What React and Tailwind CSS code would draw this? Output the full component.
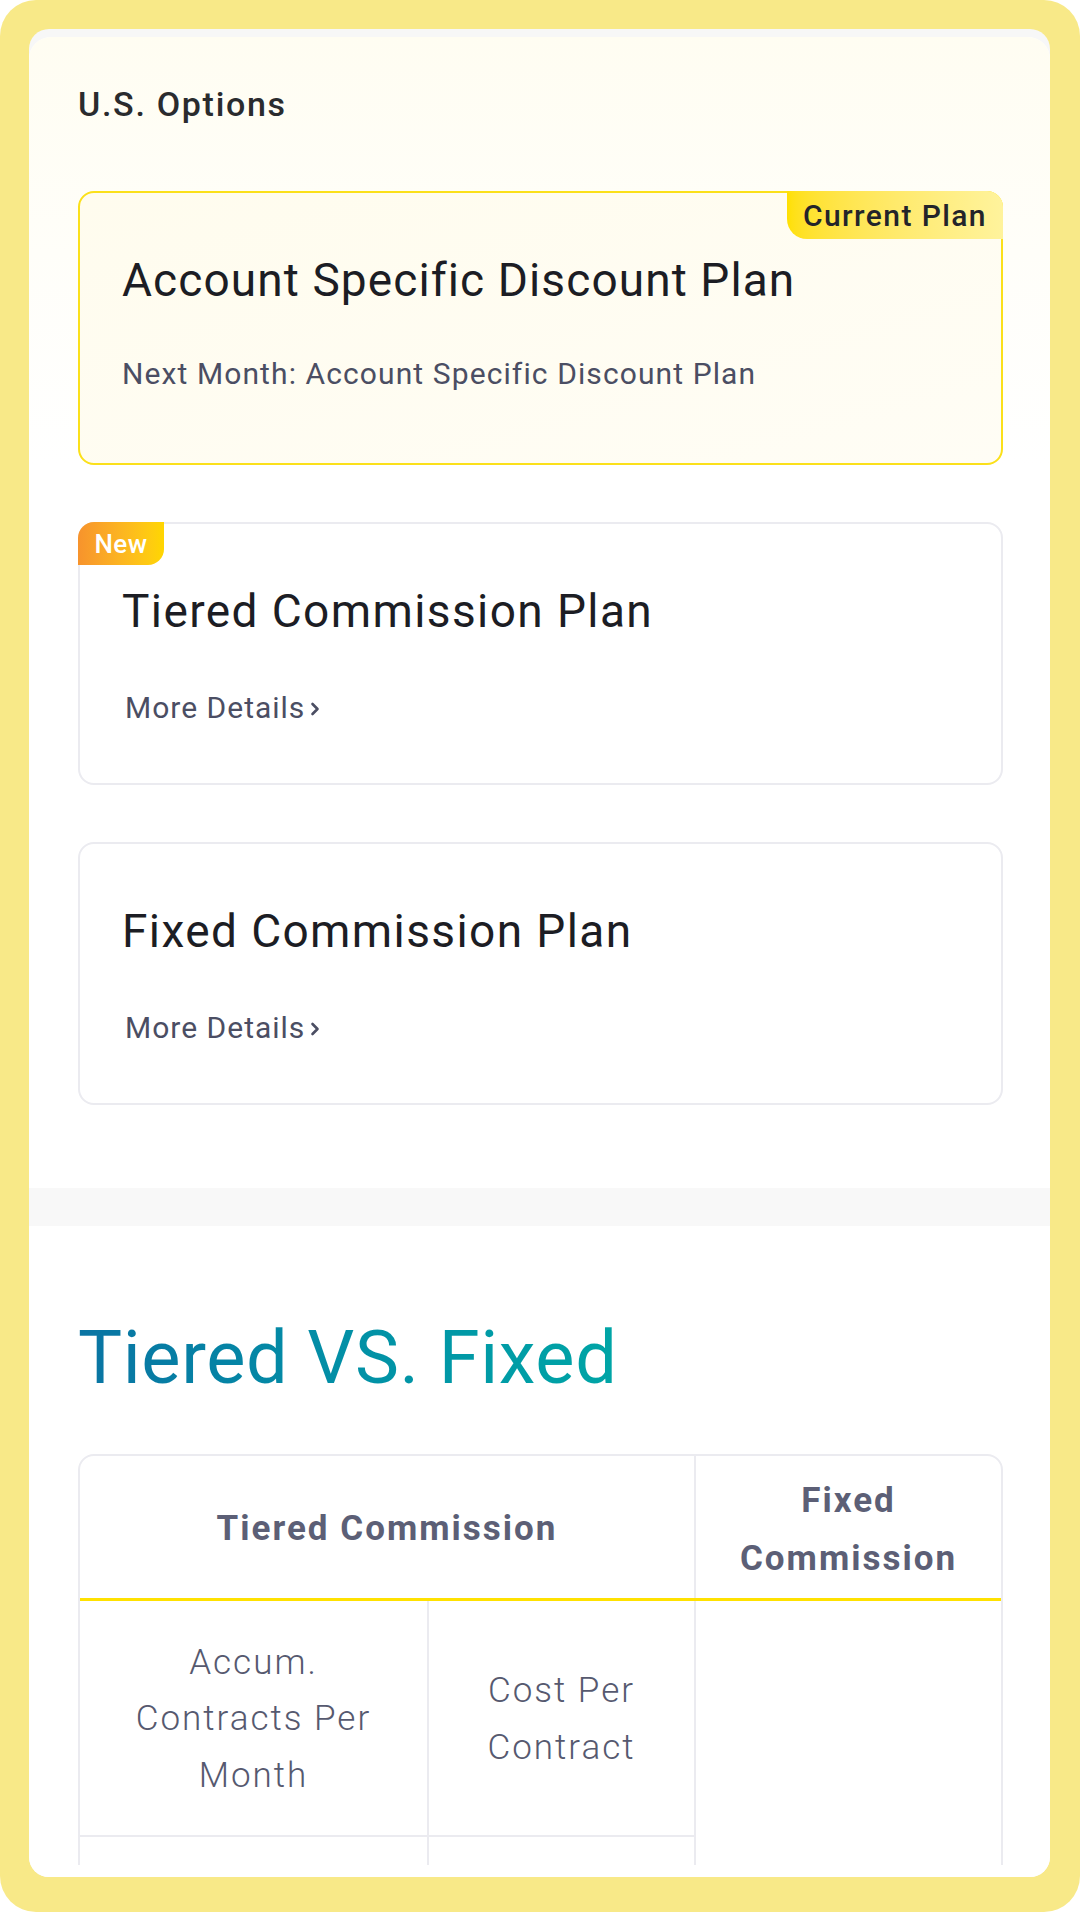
function Chevron() {
  return (
    <svg width="10" height="14" viewBox="0 0 10 14" className="ml-[5px] mt-[1px]">
      <polyline points="2.5,2 7.5,7 2.5,12" fill="none" stroke="#4b4e63" strokeWidth="2.6" strokeLinecap="round" strokeLinejoin="round" />
    </svg>
  );
}

function PlanCard({ title, badge }) {
  return (
    <div className="relative ml-[49px] mt-[57px] w-[925px] h-[263px] rounded-[16px] border-2 border-[#ebebf0] bg-white pl-[42px] pt-[59px]">
      {badge && (
        <div className="absolute -left-[2px] -top-[2px] w-[86px] h-[43px] rounded-tl-[16px] rounded-br-[16px] bg-linear-to-r from-[#f7932c] to-[#ffd600] flex items-center justify-center text-white text-[26px] font-medium tracking-[0.5px] pt-[2px]">
          New
        </div>
      )}
      <div className="h-[56px] leading-[56px] text-[46px] text-[#1c1d24] tracking-[1.4px]">{title}</div>
      <div className="mt-[49px] h-[40px] flex items-center text-[30px] text-[#4b4e63] tracking-[1px] pl-[3px]">
        <span className="leading-[40px]">More Details</span>
        <Chevron />
      </div>
    </div>
  );
}

export default function App() {
  return (
    <div className="w-[1080px] h-[1920px] bg-white font-['Roboto',_sans-serif]">
      <div className="w-[1080px] h-[1912px] rounded-[36px] bg-[#f8e988] pt-[29px] pl-[29px] pr-[30px] pb-[35px] flex">
        <div className="flex-1 rounded-[20px] bg-[#f7f7f7] overflow-hidden flex flex-col">
          <div className="mt-[8px] h-[1828px] shrink-0 rounded-t-[22px] bg-white overflow-hidden">
            <div className="bg-linear-to-b from-[#fffdf2] via-[#fffef9] to-white pt-[47px]">
              <div className="ml-[49px] h-[40px] leading-[40px] text-[34px] font-medium text-[#2a2b2e] tracking-[1.7px]">
                U.S. Options
              </div>
              <div className="relative ml-[49px] mt-[67px] w-[925px] h-[274px] rounded-[16px] border-2 border-[#fbe01a] bg-linear-to-br from-[#fffcee] to-[#fffdf5] pl-[42px] pt-[59px]">
                <div className="absolute -right-[2px] -top-[2px] w-[216px] h-[48px] rounded-tr-[16px] rounded-bl-[20px] bg-linear-to-r from-[#ffe000] to-[#fff39c] flex items-center justify-center text-[30px] font-medium text-[#23242a] tracking-[1.4px]">
                  Current Plan
                </div>
                <div className="h-[56px] leading-[56px] text-[46px] text-[#1c1d24] tracking-[1.1px]">
                  Account Specific Discount Plan
                </div>
                <div className="mt-[46px] h-[40px] leading-[40px] text-[30px] text-[#4b4e63] tracking-[1.1px]">
                  Next Month: Account Specific Discount Plan
                </div>
              </div>
            </div>

            <PlanCard title="Tiered Commission Plan" badge />
            <PlanCard title="Fixed Commission Plan" />

            <div className="mt-[83px] h-[38px] bg-[#f8f8f8]" />

            <div className="ml-[49px] mt-[95px] h-[74px] leading-[74px] text-[74px] tracking-[0.6px] bg-linear-to-r from-[#0a74a3] via-[#0290a6] to-[#00a5a6] bg-clip-text text-transparent w-fit">
              Tiered VS. Fixed
            </div>

            <div className="ml-[49px] mt-[59px] w-[925px] h-[600px] rounded-[16px] border-2 border-[#ebebf0] overflow-hidden">
              <div className="flex h-[145px] border-b-[3px] border-[#ffe100]">
                <div className="w-[616px] pt-[5px] border-r-2 border-[#ebebf0] flex items-center justify-center text-[35px] font-bold text-[#5c5f76] tracking-[2px]">
                  Tiered Commission
                </div>
                <div className="flex-1 pt-[5px] flex items-center justify-center text-center text-[35px] leading-[58px] font-bold text-[#5c5f76] tracking-[2px]">
                  <div>
                    Fixed
                    <br />
                    Commission
                  </div>
                </div>
              </div>
              <div className="flex h-full">
                <div className="w-[616px] border-r-2 border-[#ebebf0]">
                  <div className="flex h-[236px] border-b-2 border-[#ebebf0]">
                    <div className="w-[349px] pt-[3px] border-r-2 border-[#ebebf0] flex items-center justify-center text-center text-[35px] leading-[56.5px] font-light text-[#56596f] tracking-[2px]">
                      <div>
                        Accum.
                        <br />
                        Contracts Per
                        <br />
                        Month
                      </div>
                    </div>
                    <div className="flex-1 pt-[3px] flex items-center justify-center text-center text-[35px] leading-[56.5px] font-light text-[#56596f] tracking-[2px]">
                      <div>
                        Cost Per
                        <br />
                        Contract
                      </div>
                    </div>
                  </div>
                  <div className="flex h-[200px]">
                    <div className="w-[349px] border-r-2 border-[#ebebf0]" />
                    <div className="flex-1" />
                  </div>
                </div>
                <div className="flex-1" />
              </div>
            </div>
          </div>
          <div className="flex-1 bg-white" />
        </div>
      </div>
    </div>
  );
}
